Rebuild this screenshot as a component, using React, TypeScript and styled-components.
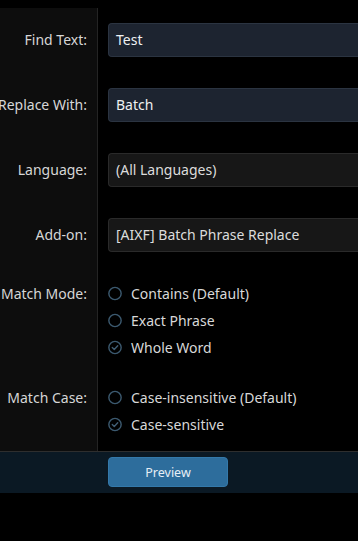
import React from 'react';
import styled, { createGlobalStyle } from 'styled-components';

const GlobalStyle = createGlobalStyle`
  html, body {
    margin: 0;
    padding: 0;
    background: #000;
  }
  body {
    font-family: "Segoe UI", "Noto Sans", "Open Sans", sans-serif;
  }
`;

const Page = styled.div`
  width: 358px;
  height: 541px;
  overflow: hidden;
  background: #000;
  padding-top: 8px;
  box-sizing: border-box;
`;

const Form = styled.div`
  display: grid;
  grid-template-columns: 98px 1fr;
`;

const LabelCell = styled.div<{ $pad: string; $line: number }>`
  display: flex;
  justify-content: flex-end;
  align-items: flex-start;
  background: #0d0d0d;
  border-right: 1px solid #242424;
  padding: ${(p) => p.$pad};
  padding-right: 10px;
  color: #d6d6d6;
  font-size: 14px;
  line-height: ${(p) => p.$line}px;
  white-space: nowrap;
  overflow: hidden;
  min-width: 0;
`;

const FieldCell = styled.div<{ $pad: string }>`
  padding: ${(p) => p.$pad};
  padding-left: 10px;
  min-width: 0;
`;

const TextBox = styled.div<{ $select?: boolean }>`
  height: 34px;
  box-sizing: border-box;
  border-radius: 4px 0 0 4px;
  border: 1px solid ${(p) => (p.$select ? '#2a2a2a' : '#2b3441')};
  border-right: none;
  background: ${(p) => (p.$select ? '#171717' : '#1d2430')};
  color: ${(p) => (p.$select ? '#dcdcdc' : '#eef0f2')};
  font-size: 14px;
  line-height: 32px;
  padding-left: 7px;
  white-space: nowrap;
  overflow: hidden;
`;

const RadioList = styled.div`
  display: flex;
  flex-direction: column;
`;

const RadioItem = styled.div`
  display: flex;
  align-items: center;
  gap: 9px;
  height: 27px;
  color: #d8d8d8;
  font-size: 14px;
  white-space: nowrap;
`;

const Circle = styled.span`
  width: 14px;
  height: 14px;
  flex: none;
  display: flex;
  align-items: center;
  justify-content: center;
`;

const Footer = styled.div`
  border-top: 1px solid #2e2e2e;
  background: #0b1924;
  height: 42px;
  box-sizing: border-box;
  padding: 5px 0 0 108px;
`;

const PreviewButton = styled.button`
  width: 120px;
  height: 30px;
  border-radius: 4px;
  border: 1px solid #3479aa;
  background: #2d6d9c;
  color: #e6eef6;
  font-family: "Segoe UI", "Noto Sans", "Open Sans", sans-serif;
  font-size: 12.5px;
  padding: 0;
`;

const Radio: React.FC<{ checked?: boolean; label: string }> = ({ checked, label }) => (
  <RadioItem>
    <Circle>
      <svg width="15" height="15" viewBox="0 0 15 15">
        <circle cx="7.5" cy="7.5" r="6.6" fill="none" stroke="#3c5a70" strokeWidth="1.5" />
        {checked && (
          <path d="M4.6 7.6 L6.7 9.6 L10.4 5.6" fill="none" stroke="#405d73" strokeWidth="1.5" strokeLinecap="round" strokeLinejoin="round" />
        )}
      </svg>
    </Circle>
    {label}
  </RadioItem>
);

const inputPad = '15px 0 16px';

export default function App() {
  return (
    <Page>
      <GlobalStyle />
      <Form>
        <LabelCell $pad={inputPad} $line={34}><span>Find Text:</span></LabelCell>
        <FieldCell $pad={inputPad}>
          <TextBox>Test</TextBox>
        </FieldCell>

        <LabelCell $pad={inputPad} $line={34}><span>Replace With:</span></LabelCell>
        <FieldCell $pad={inputPad}>
          <TextBox>Batch</TextBox>
        </FieldCell>

        <LabelCell $pad={inputPad} $line={34}><span>Language:</span></LabelCell>
        <FieldCell $pad={inputPad}>
          <TextBox $select>(All Languages)</TextBox>
        </FieldCell>

        <LabelCell $pad={inputPad} $line={34}><span>Add-on:</span></LabelCell>
        <FieldCell $pad={inputPad}>
          <TextBox $select>[AIXF] Batch Phrase Replace</TextBox>
        </FieldCell>

        <LabelCell $pad="12px 0 11px" $line={27}><span>Match Mode:</span></LabelCell>
        <FieldCell $pad="12px 0 11px">
          <RadioList>
            <Radio label="Contains (Default)" />
            <Radio label="Exact Phrase" />
            <Radio checked label="Whole Word" />
          </RadioList>
        </FieldCell>

        <LabelCell $pad="12px 0 13px" $line={27}><span>Match Case:</span></LabelCell>
        <FieldCell $pad="12px 0 13px">
          <RadioList>
            <Radio label="Case-insensitive (Default)" />
            <Radio checked label="Case-sensitive" />
          </RadioList>
        </FieldCell>
      </Form>
      <Footer>
        <PreviewButton>Preview</PreviewButton>
      </Footer>
    </Page>
  );
}
